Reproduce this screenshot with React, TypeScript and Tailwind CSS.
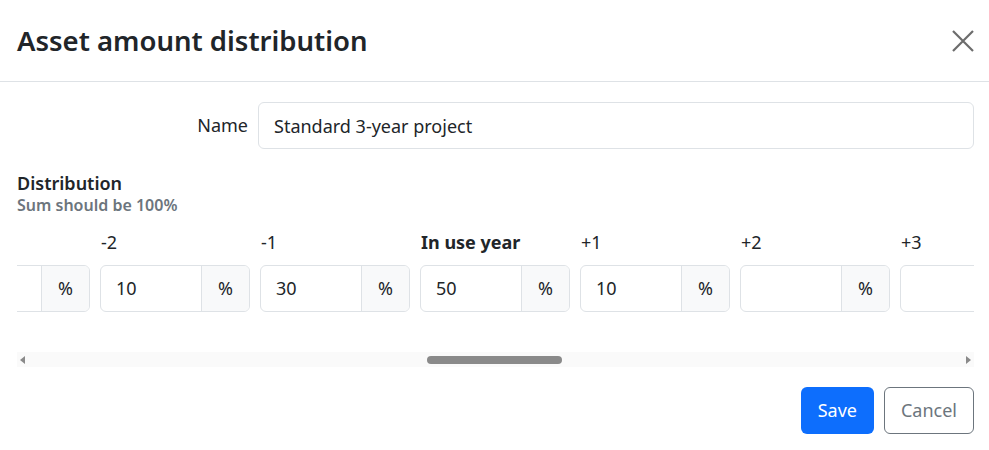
import React from "react";

const cols = [
  { label: "\u00a0", value: "", bold: false },
  { label: "-2", value: "10", bold: false },
  { label: "-1", value: "30", bold: false },
  { label: "In use year", value: "50", bold: true },
  { label: "+1", value: "10", bold: false },
  { label: "+2", value: "", bold: false },
  { label: "+3", value: "", bold: false },
];

export default function App() {
  return (
    <div
      className="w-[989px] h-[450px] bg-white text-[#212529] overflow-hidden"
      style={{ fontFamily: '"Noto Sans", "Open Sans", sans-serif' }}
    >
      {/* Header */}
      <div className="h-[82px] border-b border-[#dee2e6] flex items-center justify-between pl-[17px] pr-[14px]">
        <h1 className="text-[27.5px] font-semibold leading-none">Asset amount distribution</h1>
        <button className="w-[24px] h-[24px] flex items-center justify-center text-[#6c6c6c]">
          <svg width="22" height="22" viewBox="0 0 22 22" fill="none" stroke="currentColor" strokeWidth="2.2">
            <path d="M1 1L21 21M21 1L1 21" />
          </svg>
        </button>
      </div>

      {/* Body */}
      <div className="pt-[20px] px-[15px]">
        <div className="flex items-center">
          <label className="w-[243px] text-right pr-[10px] text-[18px]">Name</label>
          <input
            readOnly
            value="Standard 3-year project"
            className="flex-1 h-[47px] border border-[#dee2e6] rounded-[6px] px-[15px] text-[18px] text-[#212529] outline-none"
          />
        </div>

        <div className="mt-[22px] pl-[2px]">
          <div className="text-[18px] font-semibold leading-[24px]">Distribution</div>
          <div className="text-[16px] font-semibold text-[#6c757d] leading-[20px]">Sum should be 100%</div>
        </div>

        <div className="mt-[9px] ml-[2px] w-[957px] overflow-hidden">
          <div className="flex gap-[10px] ml-[-77px]">
            {cols.map((c, i) => (
              <div key={i} className="w-[150px] shrink-0">
                <div className={`h-[41px] pt-[5px] text-[18px] pl-[1px] ${c.bold ? "font-bold" : ""}`}>{c.label}</div>
                <div className="flex h-[47px] border border-[#dee2e6] rounded-[6px] overflow-hidden">
                  <div className="flex-1 px-[15px] flex items-center text-[18px]">{c.value}</div>
                  <div className="w-[48px] border-l border-[#dee2e6] bg-[#f8f9fa] flex items-center justify-center text-[18px]">%</div>
                </div>
              </div>
            ))}
          </div>
          {/* fake scrollbar */}
          <div className="mt-[40px] h-[15px] bg-[#fafafa] flex items-center justify-between px-[3px]">
            <svg width="6" height="8" viewBox="0 0 6 8"><path d="M5 0L0 4L5 8Z" fill="#8a8a8a" /></svg>
            <div className="flex-1 flex items-center">
              <div className="ml-[401px] w-[135px] h-[8px] rounded-full bg-[#8a8a8a]" />
            </div>
            <svg width="6" height="8" viewBox="0 0 6 8"><path d="M1 0L6 4L1 8Z" fill="#8a8a8a" /></svg>
          </div>
        </div>
      </div>

      {/* Footer */}
      <div className="flex justify-end gap-[10px] pr-[15px] mt-[20px]">
        <button className="h-[47px] px-[17px] rounded-[6px] bg-[#0d6efd] text-white text-[18px]">Save</button>
        <button className="h-[47px] px-[16px] rounded-[6px] border border-[#6c757d] text-[#6c757d] text-[18px]">Cancel</button>
      </div>
    </div>
  );
}
